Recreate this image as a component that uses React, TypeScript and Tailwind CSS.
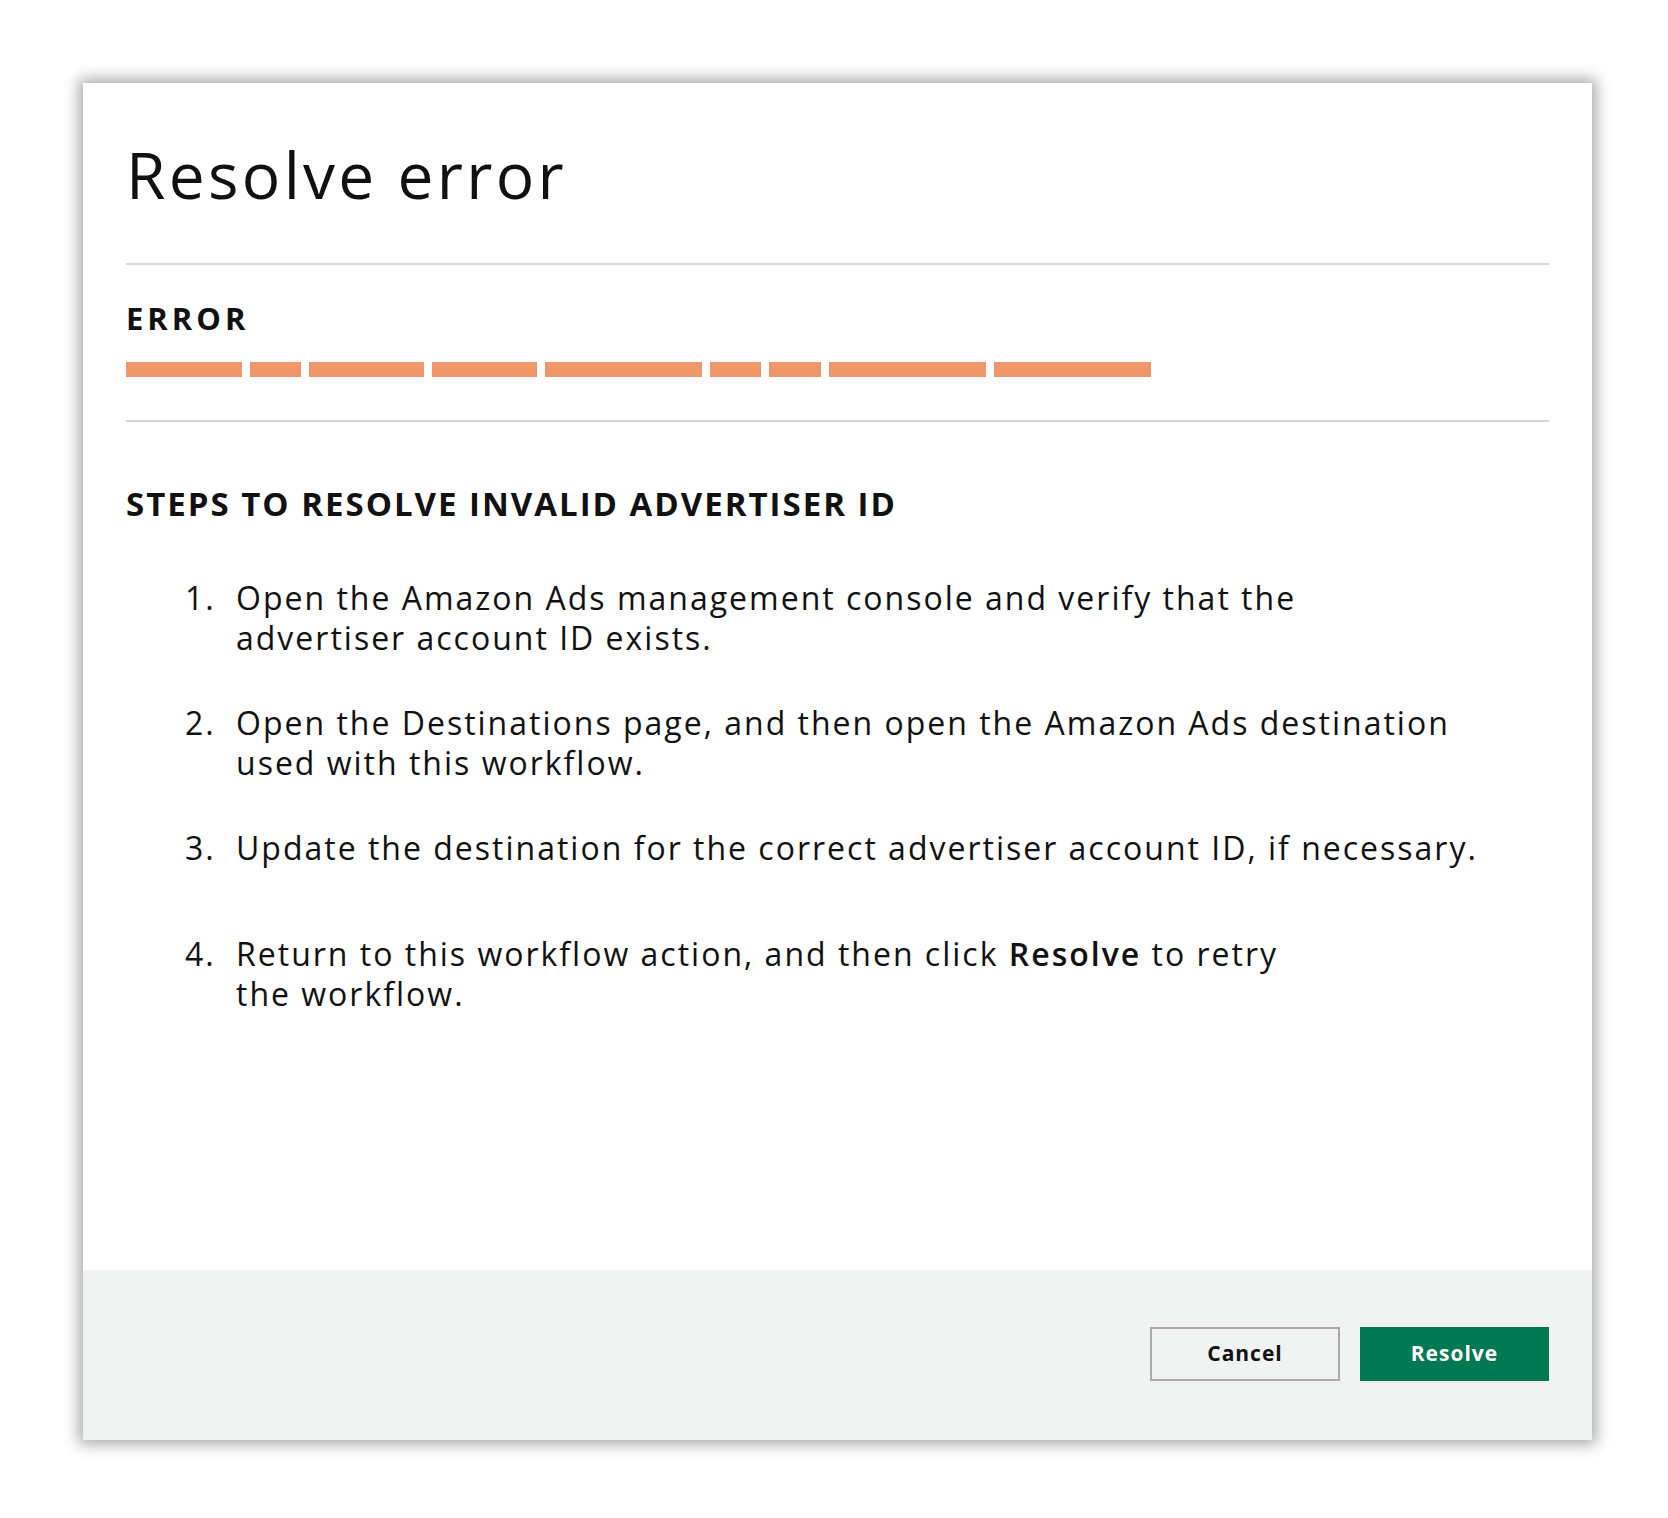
const bars = [116, 51, 115, 105, 157, 51, 52, 157, 157];

const steps: React.ReactNode[][] = [
  [
    "Open the Amazon Ads management console and verify that the",
    "advertiser account ID exists.",
  ],
  [
    "Open the Destinations page, and then open the Amazon Ads destination",
    "used with this workflow.",
  ],
  ["Update the destination for the correct advertiser account ID, if necessary."],
  [
    <>
      Return to this workflow action, and then click <b className="font-semibold">Resolve</b> to retry
    </>,
    "the workflow.",
  ],
];

const gaps = ["mb-[45px]", "mb-[45px]", "mb-[66px]", ""];

export default function App() {
  return (
    <div
      className="w-[1668px] h-[1518px] bg-white pt-[83px] pl-[83px]"
      style={{ fontFamily: '"Open Sans", "Liberation Sans", sans-serif' }}
    >
      <div className="w-[1509px] h-[1357px] bg-white flex flex-col shadow-[0_0_14px_4px_rgba(0,0,0,0.35)] text-[#111]">
        <div className="flex-1 px-[43px]">
          <h1 className="pt-[52px] h-[180px] text-[64px] leading-[80px] font-normal tracking-[3.3px]">
            Resolve error
          </h1>
          <div className="border-t-2 border-[#d6d6d6]" />
          <div className="pt-[33px] text-[31px] leading-[40px] font-bold tracking-[4px]">ERROR</div>
          <div className="flex gap-[8px] mt-[24px]">
            {bars.map((w, i) => (
              <div key={i} className="h-[15px] bg-[#ef976a]" style={{ width: w }} />
            ))}
          </div>
          <div className="border-t-2 border-[#d6d6d6] mt-[43px]" />
          <div className="pt-[60px] text-[33px] leading-[44px] font-bold tracking-[2px]">
            STEPS TO RESOLVE INVALID ADVERTISER ID
          </div>
          <ol className="mt-[52px] text-[32px] leading-[40px] tracking-[2px]">
            {steps.map((lines, i) => (
              <li key={i} className={`flex ${gaps[i]}`}>
                <span className="w-[110px] pl-[59px] shrink-0">{i + 1}.</span>
                <div>
                  {lines.map((l, j) => (
                    <div key={j} className="whitespace-nowrap">
                      {l}
                    </div>
                  ))}
                </div>
              </li>
            ))}
          </ol>
        </div>
        <div className="h-[170px] bg-[#f1f3f2] flex items-start justify-end gap-[20px] pr-[43px] pt-[57px]">
          <button className="w-[190px] h-[54px] border-2 border-[#aaaaaa] bg-[#f1f3f2] text-[21px] font-bold tracking-[1px]">
            Cancel
          </button>
          <button className="w-[189px] h-[54px] bg-[#007852] text-white text-[21px] font-bold tracking-[1px]">
            Resolve
          </button>
        </div>
      </div>
    </div>
  );
}
